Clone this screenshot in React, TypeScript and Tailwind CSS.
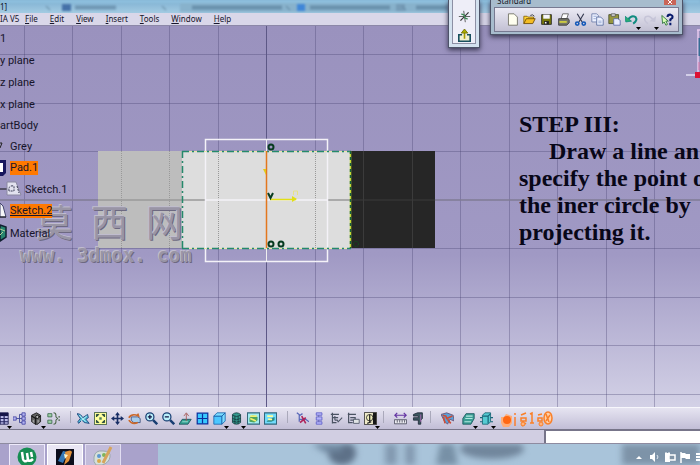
import type { ReactNode } from "react";

const menus = ["File", "Edit", "View", "Insert", "Tools", "Window", "Help"];

const gridX = [24, 72, 121, 169, 218, 315, 363, 412, 460, 509, 557, 606, 654];
const gridY = [28, 77, 125, 222, 271, 319, 368];

type IconProps = { name: string; className?: string };

// every glyph is drawn on a 16 x 16 box
const glyphs: Record<string, ReactNode> = {
  new: <path d="M3 1h7l4 4v10H3z" fill="#fffff0" stroke="#66665a" />,
  open: (
    <>
      <path d="M1 13V4h4l1 1h7v3" fill="#ffd536" stroke="#856000" />
      <path d="M1 13l3-6h11l-3 6z" fill="#f5bd24" stroke="#664400" />
      <path d="M9 3q3-2 5 1" fill="none" stroke="#222" />
    </>
  ),
  save: (
    <>
      <path d="M2 2h12v12H2z" fill="#77770a" stroke="#222" />
      <path d="M4 2h8v5H4z" fill="#f4f4fa" />
      <path d="M5 10h6v4H5z" fill="#222" />
      <path d="M6 11h2v2H6z" fill="#fff" />
    </>
  ),
  print: (
    <>
      <path d="M5 7l2-6h7l-2 6z" fill="#fff" stroke="#555" />
      <path d="M2 7h12l1 2v3l-3 3H2z" fill="#77776a" stroke="#333" />
      <path d="M3 11h9" stroke="#d9d73d" strokeWidth="2" />
    </>
  ),
  cut: (
    <>
      <path d="M4 1l6 10M12 1L6 11" stroke="#33384f" strokeWidth="1.4" />
      <circle cx="4" cy="13" r="2" fill="none" stroke="#1358b8" strokeWidth="2" />
      <circle cx="12" cy="13" r="2" fill="none" stroke="#1358b8" strokeWidth="2" />
    </>
  ),
  copy: (
    <>
      <path d="M1 1h6l2 2v8H1z" fill="#eef2ff" stroke="#6677a5" />
      <path d="M7 5h5l3 3v7H7z" fill="#eef2ff" stroke="#52679c" />
      <path d="M3 4h4M3 7h3M9 10h4M9 12h4" stroke="#8ba0cf" />
    </>
  ),
  paste: (
    <>
      <path d="M1 2h12v11H1z" fill="#97963e" stroke="#444b28" />
      <path d="M4 1h5v3H4z" fill="#dedede" stroke="#555" />
      <path d="M7 7h5l3 2v6H7z" fill="#e9edff" stroke="#5a69a6" />
    </>
  ),
  undo: (
    <>
      <path d="M4 8q4-6 9-3 3 4-3 8" fill="none" stroke="#118c80" strokeWidth="2.5" />
      <path d="M0 4l1 7 7-1z" fill="#29ac72" stroke="#118c80" />
    </>
  ),
  redo: (
    <>
      <path d="M12 8Q8 2 3 5q-3 4 3 8" fill="none" stroke="#c6c5d8" strokeWidth="2" />
      <path d="M16 4l-1 7-7-1z" fill="#c6c5d8" />
    </>
  ),
  help: (
    <>
      <path d="M1 3l1 10 2-2 2 4 2-1-2-4h3z" fill="#d8ffb5" stroke="#226b32" />
      <path d="M8 5q0-3 3.5-3 3.5 1 2.5 4l-2.5 2v2M11.5 12v3" fill="none" stroke="#07196b" strokeWidth="2.5" />
    </>
  ),
  axes: (
    <>
      <path d="M1 8h14M7 1l2 14" stroke="#444" />
      <path d="M3 13L13 3" stroke="#333" strokeWidth="1.5" />
      <path d="M4 5q4 0 4 3t4 3" fill="none" stroke="#3d8a55" strokeWidth="1.5" />
    </>
  ),
  exit: (
    <>
      <path d="M5 7H1v8h14V7h-4" fill="#f1f0d0" stroke="#174f5e" strokeWidth="2" />
      <path d="M8 12V4" stroke="#a49b00" strokeWidth="2" />
      <path d="M4 5l4-5 4 5z" fill="#aeb000" stroke="#6d6a00" />
    </>
  ),
  table: (
    <>
      <path d="M1 1h14v14H1z" fill="#bcbce8" stroke="#151548" />
      <path d="M1 3h14" stroke="#151548" strokeWidth="4" />
      <path d="M1 8h14M1 12h14M5 4v11M10 4v11" stroke="#23235d" strokeWidth="1.5" />
    </>
  ),
  tree: (
    <>
      <path d="M3 8h5M8 3v10M8 3h4M8 8h4M8 13h4" fill="none" stroke="#333c90" />
      <path d="M0 6h4v4H0zM11 1h4v4h-4zM11 6h4v4h-4zM11 11h4v4h-4z" fill="#b5b5f0" stroke="#4242a2" />
    </>
  ),
  gear: (
    <>
      <path d="M2 4l6-3 5 3v8l-5 4-6-4z" fill="#666" stroke="#111" />
      <path d="M2 5l5 3 6-3M7 8v7" fill="none" stroke="#161616" strokeWidth="1.5" />
      <circle cx="9" cy="6" r="2" fill="#bbb" stroke="#000" />
      <path d="M4 10v3M10 10v3" stroke="#ccc" />
    </>
  ),
  relation: (
    <>
      <path d="M1 2h5v4H1zM1 10h5v4H1z" fill="#9cd1a3" stroke="#3c684e" />
      <path d="M8 1q3 0 3 3v2l2 2-2 2v2q0 3-3 3M14 6h2M14 10h2" fill="none" stroke="#4a6547" strokeWidth="1.3" />
    </>
  ),
  fly: (
    <>
      <path d="M0 2q5 0 7 5l6-4 1 4-3 2 4 5-6-1-3-3-4 4-1-2 3-4z" fill="#4fb7d3" stroke="#173e78" />
      <path d="M3 4l8 8M5 11l7-6" stroke="#d5ffff" />
    </>
  ),
  fit: (
    <>
      <path d="M0.5 0.5h15v15h-15z" fill="#ffff9c" stroke="#254a35" />
      <path d="M3 3h3L3 6zM10 3h3v3zM3 10v3h3zM13 10v3h-3z" fill="#173e37" stroke="#173e37" />
      <path d="M6.500 6.500h3v3h-3z" fill="#4f7f62" />
    </>
  ),
  pan: (
    <>
      <path d="M8 3v10M3 8h10" stroke="#162d64" strokeWidth="2" />
      <path d="M8 0l3 4H5zM8 16l3-4H5zM0 8l4-3v6zM16 8l-4-3v6z" fill="#162d64" />
    </>
  ),
  rotate: (
    <>
      <path d="M4 6h8l3 2v5H7l-3-3z" fill="#a6cdec" stroke="#3b4c77" />
      <path d="M1 7q4-6 12-2l-1-3M1 10q4 6 11 3" fill="none" stroke="#cb6828" strokeWidth="2" />
    </>
  ),
  zoomIn: (
    <>
      <circle cx="6" cy="6" r="5" fill="#b9f0fa" stroke="#173d72" strokeWidth="1.5" />
      <path d="M10 10l5 5" stroke="#173d72" strokeWidth="3" />
      <path d="M3.5 6h5M6 3.5v5" stroke="#101040" strokeWidth="1.5" />
    </>
  ),
  zoomOut: (
    <>
      <circle cx="6" cy="6" r="5" fill="#b9f0fa" stroke="#173d72" strokeWidth="1.5" />
      <path d="M10 10l5 5" stroke="#173d72" strokeWidth="3" />
      <path d="M3.5 6h5" stroke="#101040" strokeWidth="1.5" />
    </>
  ),
  normal: (
    <>
      <path d="M0 15l4-6h11l-4 6z" fill="#33a393" stroke="#174e58" />
      <path d="M4 12h7" stroke="#a9e4d9" />
      <path d="M9 11V2M6 5l3-4 3 4" fill="none" stroke="#a4524d" />
    </>
  ),
  multi: (
    <>
      <path d="M1.5 1.5h13v13h-13z" fill="#39c9ff" stroke="#0a2f9d" strokeWidth="1.5" />
      <path d="M8 2v12M2 8h12" stroke="#0a2f9d" strokeWidth="1.5" />
    </>
  ),
  iso: (
    <>
      <path d="M1 5h10v10H1z" fill="#4cc7ff" stroke="#1761aa" />
      <path d="M1 5l4-4h10l-4 4zM11 5l4-4v10l-4 4z" fill="#7cddff" stroke="#1761aa" />
    </>
  ),
  cylinder: (
    <>
      <path d="M3 3q5-4 10 0v10q-5 4-10 0z" fill="#349b8f" stroke="#143a3d" />
      <path d="M3 4q5 3 10 0M3 8q5 3 10 0M3 11q5 3 10 0M6 5v10M10 5v10" fill="none" stroke="#143a3d" />
    </>
  ),
  show: (
    <>
      <path d="M0.5 1h15v14H0.5z" fill="#a3edf1" stroke="#32677d" strokeWidth="1.5" />
      <path d="M3 12V7l4-3 6 2v4l-4 3z" fill="#50a55c" />
      <path d="M4 8l7 3M4 5h8" stroke="#efef71" strokeWidth="2" />
    </>
  ),
  swap: (
    <>
      <path d="M0.5 1h15v14H0.5z" fill="#71dbfb" stroke="#32677d" strokeWidth="1.5" />
      <path d="M3 12l3-3 7-3v4l-4 2z" fill="#288b88" />
      <path d="M4 5h7M5 9h5" stroke="#ffff99" strokeWidth="2" />
    </>
  ),
  constraint: (
    <>
      <path d="M1 1l4 3 3-2M4 3v9M4 9h8l4 3" fill="none" stroke="#5867b8" strokeWidth="1.5" />
      <path d="M7 5l5 9M12 7l-7 6" stroke="#af245a" strokeWidth="2" />
    </>
  ),
  stack: (
    <>
      <path d="M4 1h7v3H4zM4 6h7v4H4zM4 12h7v3H4z" fill="#b5b5fa" stroke="#5c5cc6" />
      <path d="M7 4v2M7 10v2" stroke="#5c5cab" />
    </>
  ),
  list: (
    <>
      <path d="M3 1v13M1 3h10M3 7h7M3 13h5" fill="none" stroke="#4b5363" strokeWidth="1.5" />
      <path d="M6 10h3l1 2 5-5M6 5v5" fill="none" stroke="#4b5363" strokeWidth="1.3" />
    </>
  ),
  listBox: (
    <>
      <path d="M2 1v12h5M1 3h10M4 7h6v3H4" fill="none" stroke="#4b5363" strokeWidth="1.5" />
      <path d="M8 9h7v5H8z" fill="#dfe3e4" stroke="#4b5363" />
    </>
  ),
  contrast: (
    <>
      <path d="M0.5 0.5h15v15H0.5z" fill="#f0ebc9" stroke="#222" />
      <path d="M11 1h4v14h-4z" fill="#161616" />
      <circle cx="7" cy="7" r="4" fill="#f1efbb" stroke="#222" />
      <path d="M7 3v9M4 14l5-2" stroke="#222" strokeWidth="1.5" />
    </>
  ),
  measure: (
    <>
      <path d="M1 4h14M4 1L1 4l3 3M12 1l3 3-3 3" fill="none" stroke="#6434a3" strokeWidth="1.5" />
      <path d="M0.5 9.5h15v5H0.5zM4 10v3M7 10v3M10 10v3M13 10v3" fill="#ededf2" stroke="#444658" />
    </>
  ),
  caliper: (
    <>
      <path d="M3 3l5-2h6v7l-2 2v5H9v-5H3V7h6V5H3z" fill="#3d5860" stroke="#1c2635" />
      <path d="M12 3v9" stroke="#bd6dc4" />
    </>
  ),
  material: (
    <>
      <path d="M0 3l7-2 8 3 1 7-5-2-3 6-4-4z" fill="#58a0d9" stroke="#674e70" />
      <path d="M2 4l4 1 1 3 7-3M3 6l2 8M8 9l4 5" fill="none" stroke="#cf4c34" strokeWidth="2" />
    </>
  ),
  workbench: (
    <>
      <path d="M1 15V8l4-6h10v6l-4 7z" fill="#3c9e94" stroke="#17555d" />
      <path d="M5 5h8M4 8h9M3 12h8" stroke="#b1e8df" strokeWidth="1.5" />
    </>
  ),
  solid: (
    <>
      <path d="M3 4l3-3h7v11l-3 3H3z" fill="#55cbd2" stroke="#17606f" />
      <path d="M3 5h7l3-3M10 5v9M0 7h3M0 12h3M13 7h3M13 12h3" fill="none" stroke="#176679" strokeWidth="1.5" />
    </>
  ),
  snap1: (
    <>
      <path d="M0 6h3l2-3 6 2v7l-3 4H2l-2-4z" fill="#ffad77" />
      <circle cx="6" cy="9" r="4" fill="#ff6814" />
      <path d="M14 2v2M14 6v9" stroke="#fa7d2e" strokeWidth="1.5" />
    </>
  ),
  snap2: (
    <>
      <path d="M2 4l5-2M2 7h5v3H2zM4 10v5M7 12l-4 3M11 3l2-1v10M11 12h4" fill="none" stroke="#fa8028" strokeWidth="1.5" />
      <circle cx="4" cy="13" r="2" fill="#ffb27c" stroke="#fa8028" />
    </>
  ),
  snap3: (
    <>
      <path d="M1 4l4-1M1 7h4v3H1z" fill="none" stroke="#fa8028" strokeWidth="1.5" />
      <circle cx="4" cy="13" r="2" fill="#ffb27c" stroke="#fa8028" />
      <ellipse cx="11" cy="7" rx="4" ry="6" fill="#ffd0aa" stroke="#fa8028" strokeWidth="1.5" />
      <path d="M9 3l3 8M13 4l-4 6" stroke="#fa8028" strokeWidth="1.5" />
    </>
  ),
};

function Icon({ name, className = "size-4" }: IconProps) {
  return (
    <svg viewBox="0 0 16 16" className={className} aria-hidden="true">
      {glyphs[name]}
    </svg>
  );
}

type ToolButtonProps = { name: string; menu?: boolean; large?: boolean };

function ToolButton({ name, menu = false, large = false }: ToolButtonProps) {
  return (
    <button aria-label={name} className="relative flex size-4 shrink-0 items-center justify-center">
      <Icon name={name} className={large ? "size-4" : "size-[13px]"} />
      {menu && (
        <svg viewBox="0 0 5 3" className="absolute -right-[2px] -bottom-[2px] z-10 h-[3px] w-[5px]" aria-hidden="true">
          <path d="M0 0h5L2.5 3z" fill="#000" />
        </svg>
      )}
    </button>
  );
}

function Viewport() {
  return (
    <svg className="absolute inset-0 h-full w-full" aria-label="Sketch view">
      <g stroke="#45406f" strokeOpacity="0.34" shapeRendering="crispEdges">
        {gridX.map((x) => (
          <line key={x} x1={x + 0.5} x2={x + 0.5} y1="0" y2="100%" />
        ))}
        {gridY.map((y) => (
          <line key={y} x1="0" x2="100%" y1={y + 0.5} y2={y + 0.5} />
        ))}
      </g>
      <line x1="266.5" x2="266.5" y1="0" y2="100%" stroke="#5d5886" />
      <line x1="0" x2="100%" y1="174" y2="174" stroke="#7f7b95" strokeWidth="1.5" />

      <path d="M98 125h84v97H98z" fill="#bdbdbd" />
      <path d="M182 125h169v97H182z" fill="#dddddd" />
      <path d="M351 125h84v97h-84z" fill="#262626" />
      <path d="M121.5 125v97M169.5 125v97M218.5 125v97M315.5 125v97" stroke="#999" strokeDasharray="1 1" />
      <path d="M363.5 125v97M412.5 125v97M351 174h84" stroke="#3b3b3b" />
      <path d="M98 174h107M327 174h24" stroke="#999" strokeWidth="1.5" />
      <path d="M205.5 113.5h122v122h-122zM205 174h122" fill="none" stroke="#f4f2f8" strokeWidth="1.5" />
      <path d="M266.5 113v122" stroke="#eee" />

      <path d="M182 125.5h169M182 222.5h169" stroke="#e8e5a9" />
      <path
        d="M182 125.5h169M182.5 125v97M182 222.5h169"
        fill="none"
        stroke="#25896b"
        strokeWidth="1.5"
        strokeDasharray="7 3 2 3"
      />
      <path d="M350.5 125v97" stroke="#c5dc35" strokeWidth="1.5" />
      <path d="M350.5 125v97" stroke="#185f40" strokeWidth="1.5" strokeDasharray="3 3" />

      <path d="M266.5 125v97" stroke="#e3771e" strokeWidth="1.5" />
      <path d="M270 173.5h26" stroke="#e2df16" strokeWidth="1.5" />
      <path d="M292 170l5 3-5 3z" fill="#e2df16" />
      <path d="M293.5 169v-4h4v4" fill="none" stroke="#e5e28a" />
      <path d="M263 143l3 6v-6z" fill="#e2c716" />
      <g fill="none" stroke="#073b20" strokeWidth="2">
        <circle cx="271" cy="121" r="2.5" />
        <circle cx="271" cy="218" r="2.5" />
        <circle cx="281" cy="218" r="2.5" />
        <path d="M268 167l2.5 5 2.5-5" />
      </g>
      <circle cx="356" cy="218" r="2.5" fill="none" stroke="#075b1b" strokeDasharray="1 1" />
    </svg>
  );
}

function Compass() {
  return (
    <svg viewBox="0 0 14 60" className="absolute top-0 right-0 h-[60px] w-[14px]" aria-hidden="true">
      <path d="M11 4h3M12 4v42" stroke="#e6c9ee" strokeWidth="1.5" />
      <path d="M12.5 12h1.5v18h-1.5z" fill="#356d93" />
      <path d="M0 49h10" stroke="#e4e2f5" strokeWidth="1.5" />
      <path d="M13 36v8" stroke="#d977a8" />
      <path d="M9 46h5v6H9z" fill="#dd1234" />
    </svg>
  );
}

function TreeIcon({ kind }: { kind: string }) {
  if (kind === "pad") {
    return (
      <svg viewBox="0 0 8 20" className="h-5 w-2">
        <path d="M0 2h6v13l-3 3H0z" fill="#17175d" />
        <path d="M0 5h3v9H0z" fill="#fff" />
      </svg>
    );
  }
  if (kind === "sketch") {
    return (
      <svg viewBox="0 0 8 20" className="h-5 w-2">
        <path d="M0 2l3 3 3 11H0z" fill="#f5f5f7" stroke="#42456d" />
        <path d="M0 16h6" stroke="#111" />
      </svg>
    );
  }
  return (
    <svg viewBox="0 0 8 20" className="h-5 w-2">
      <path d="M0 2l6 2v10l-6 4z" fill="#27856d" stroke="#111f30" strokeWidth="1.5" />
      <path d="M0 6l5 2M0 12l3-3" stroke="#b7cf9c" />
    </svg>
  );
}

function FeatureTree() {
  return (
    <ul className="relative w-40 pt-[2px] font-[Roboto,sans-serif] text-[11px] leading-[21px] text-[#17152b]">
      <li className="h-[22px]">1</li>
      <li className="h-[22px]">y plane</li>
      <li className="h-[22px]">z plane</li>
      <li className="h-[21px]">x plane</li>
      <li className="h-[21px]">artBody</li>
      <li className="flex h-[21px] items-center">
        <svg viewBox="0 0 10 12" className="h-3 w-[10px]">
          <path d="M0 2h2L0 7" stroke="#222" fill="none" />
        </svg>
        Grey
      </li>
      <li className="flex h-[21px] items-center gap-[2px]">
        <TreeIcon kind="pad" />
        <span className="bg-[#ff7900] leading-[14px]">Pad.1</span>
      </li>
      <li className="flex h-[22px] items-center gap-[3px]">
        <svg viewBox="0 0 22 16" className="h-4 w-[22px]">
          <path d="M0 8h7" stroke="#111" />
          <path d="M7 1h9l5 13H7z" fill="#e2e2ef" stroke="#8a88a1" />
          <path d="M9 10q-1-6 5-5v5H9M17 5l2 7" fill="none" stroke="#393b55" strokeDasharray="2 1" />
        </svg>
        Sketch.1
      </li>
      <li className="flex h-[22px] items-center gap-[2px]">
        <TreeIcon kind="sketch" />
        <span className="bg-[#ff7900] leading-[14px] underline">Sketch.2</span>
      </li>
      <li className="flex h-[22px] items-center gap-[2px]">
        <TreeIcon kind="material" />
        Material
      </li>
    </ul>
  );
}

function Watermark() {
  return (
    <div className="absolute top-[175px] left-5 text-[#9995a6] [text-shadow:-1px_-1px_0_#c0bdce,1px_1px_0_#6d6981]">
      <div className="flex gap-[18px] pl-4 font-['Noto_Sans_CJK_SC',sans-serif] text-[37px] leading-10">
        <span>莫</span>
        <span>西</span>
        <span>网</span>
      </div>
      <div className="font-['DejaVu_Sans_Mono',monospace] text-[19px] leading-7 font-bold whitespace-pre">
        www. 3dmox. com
      </div>
    </div>
  );
}

function StepNote() {
  return (
    <div className="absolute inset-y-0 right-0 left-[519px] overflow-hidden pt-[85px] font-['Liberation_Serif',serif] text-[24px] leading-[27px] font-bold whitespace-nowrap text-[#080718]">
      <h1>STEP III:</h1>
      <p className="pl-[30px]">Draw a line an</p>
      <p>specify the point o</p>
      <p>the iner circle by</p>
      <p>projecting it.</p>
    </div>
  );
}

function FloatingPalettes() {
  return (
    <>
      <div className="absolute top-0 left-[448px] z-10 h-12 w-8 border border-t-0 border-[#4d5368] bg-[#d3e1ef] px-[3px] pb-[3px] shadow-[0_2px_5px_#393650]">
        <div className="flex h-full flex-col items-center justify-end gap-[3px] border border-t-0 border-[#8d90a5] bg-[#eeeef8]">
          <ToolButton name="axes" />
          <ToolButton name="exit" />
        </div>
      </div>
      <section
        aria-label="Standard"
        className="absolute top-0 left-[490px] z-10 h-[35px] w-[193px] border border-t-0 border-[#4d5368] bg-[#a7bccd] px-[3px] pb-[2px] shadow-[0_2px_5px_#393650]"
      >
        <header className="flex h-[7px] items-end justify-between overflow-hidden">
          <span className="pl-[3px] text-[8px] leading-[12px] text-[#151a28]">Standard</span>
          <button aria-label="Close" className="mr-[3px] h-[5px] w-3 self-start bg-[#c96457]">
            <svg viewBox="0 0 12 5" className="h-[5px] w-3">
              <path d="M4 0l4 4M8 0L4 4" stroke="#fff" />
            </svg>
          </button>
        </header>
        <div className="flex h-[25px] items-center gap-px border border-[#777a91] bg-linear-to-b from-[#ebeaf4] to-[#c2c0d3] pl-[9px]">
          <ToolButton name="new" />
          <ToolButton name="open" />
          <ToolButton name="save" />
          <ToolButton name="print" />
          <ToolButton name="cut" />
          <ToolButton name="copy" />
          <ToolButton name="paste" />
          <div className="flex gap-[2px]">
            <ToolButton name="undo" menu />
            <ToolButton name="redo" menu />
            <ToolButton name="help" />
          </div>
        </div>
      </section>
    </>
  );
}

function Divider() {
  return <span className="h-3 w-px shrink-0 bg-[#aaa9bb]" />;
}

function BottomToolbar() {
  return (
    <div
      role="toolbar"
      className="flex h-[23px] items-center gap-px overflow-hidden border-t border-b border-t-[#f7f7fc] border-b-[#777588] bg-linear-to-b from-[#e6e4f1] to-[#c2bed6]"
    >
      <div className="-ml-[6px] flex w-[80px] shrink-0 gap-px">
        <ToolButton name="table" menu />
        <ToolButton name="tree" />
        <ToolButton name="gear" menu />
        <ToolButton name="relation" />
        <span className="ml-2 flex">
          <Divider />
        </span>
      </div>
      <div className="flex w-[218px] shrink-0 gap-px">
        <ToolButton name="fly" />
        <ToolButton name="fit" />
        <ToolButton name="pan" />
        <ToolButton name="rotate" />
        <ToolButton name="zoomIn" />
        <ToolButton name="zoomOut" />
        <ToolButton name="normal" />
        <ToolButton name="multi" />
        <ToolButton name="iso" menu />
        <ToolButton name="cylinder" menu />
        <ToolButton name="show" />
        <ToolButton name="swap" />
        <span className="ml-2 flex">
          <Divider />
        </span>
      </div>
      <div className="flex w-[97px] shrink-0 gap-px">
        <ToolButton name="constraint" />
        <ToolButton name="stack" />
        <ToolButton name="list" />
        <ToolButton name="listBox" />
        <ToolButton name="contrast" menu />
        <span className="ml-1 flex">
          <Divider />
        </span>
      </div>
      <div className="flex w-[46px] shrink-0 gap-px">
        <ToolButton name="measure" />
        <ToolButton name="caliper" />
        <span className="ml-1 flex">
          <Divider />
        </span>
      </div>
      <div className="flex w-[20px] shrink-0">
        <ToolButton name="material" />
      </div>
      <div className="flex w-[40px] shrink-0 gap-[2px]">
        <ToolButton name="workbench" menu />
        <ToolButton name="solid" menu />
      </div>
      <div className="flex gap-[2px]">
        <ToolButton name="snap1" large />
        <ToolButton name="snap2" large />
        <ToolButton name="snap3" large />
      </div>
    </div>
  );
}

function Taskbar() {
  return (
    <footer className="relative flex h-[21px] items-start gap-[2px] overflow-hidden bg-[#a9c4da] pl-[9px]">
      {/* blurred wallpaper behind the glass */}
      <div className="absolute inset-y-0 left-0 w-[158px] bg-[#a9a2cb]" />
      <svg className="absolute inset-0 h-full w-full blur-[3px]" aria-hidden="true">
        <ellipse cx="342" cy="9" rx="14" ry="12" fill="#5d7087" />
        <path d="M312 0h30v8h-18z" fill="#6f879f" />
        <path d="M385 0h12v21h-12zM405 0h10v21h-10z" fill="#8299b0" />
        <path d="M440 0h14l4 21h-22z" fill="#7790a6" />
        <ellipse cx="492" cy="5" rx="32" ry="10" fill="#71869c" />
        <path d="M622 0h90v24h-90z" fill="#7d93a8" />
      </svg>
      <button aria-label="uTorrent" className="relative h-[21px] w-9 border border-b-0 border-[#eeeafb] bg-[#c2bcda]">
        <svg viewBox="0 0 24 20" className="mx-auto h-5 w-6">
          <circle cx="12" cy="12" r="9.5" fill="#168d52" />
          <path d="M7 7l1 7q1 4 5 1l-1-7M13 15q2 2 5-1M16 7l1 5" fill="none" stroke="#fff" strokeWidth="2.5" />
        </svg>
      </button>
      <button aria-label="CATIA" className="relative h-[21px] w-9 border border-b-0 border-white bg-[#e9e6f4]">
        <svg viewBox="0 0 20 20" className="mx-auto h-5 w-5">
          <path d="M1 4h18v16H1z" fill="#0b0d1c" />
          <path d="M3 16l5-10 5 1-5 11z" fill="#3478b8" />
          <path d="M10 7q6-3 7 0l-3 9-5 4 2-7z" fill="#e2923b" />
          <path d="M9 9l4 1-3 4z" fill="#fff3c8" />
        </svg>
      </button>
      <button aria-label="Paint" className="relative h-[21px] w-9 border border-b-0 border-[#e2def2] bg-[#c2bcda]">
        <svg viewBox="0 0 24 20" className="mx-auto h-5 w-6">
          <path d="M3 12q1-7 9-6 8 0 7 6t-8 8H5q-3-3-2-8z" fill="#d6e0d9" stroke="#9aa7ad" />
          <circle cx="8" cy="11" r="2" fill="#5c98d0" />
          <circle cx="13" cy="10" r="2" fill="#7fb45a" />
          <circle cx="8" cy="16" r="2" fill="#d9a94c" />
          <path d="M20 2l-8 16" stroke="#d6a45c" strokeWidth="3" />
        </svg>
      </button>
      <div className="relative ml-auto flex h-full items-center gap-[3px] pt-1">
        <svg viewBox="0 0 8 12" className="mr-[3px] h-3 w-2" aria-hidden="true">
          <path d="M1 8l3-3 3 3z" fill="#fff" />
        </svg>
        <svg viewBox="0 0 12 12" className="h-3 w-3" aria-hidden="true">
          <path d="M1 4h2l3-3v10L3 8H1z" fill="#fff" />
          <path d="M8 4q2 2 0 4" fill="none" stroke="#dfe8f0" />
        </svg>
        <svg viewBox="0 0 12 12" className="h-3 w-3" aria-hidden="true">
          <path d="M1 2h5v9H1z" fill="#fff" />
          <path d="M5 4h6v5H5z" fill="#8194a6" stroke="#fff" strokeWidth="1.5" />
          <path d="M2 1v2M5 1v2" stroke="#fff" />
        </svg>
        <svg viewBox="0 0 12 12" className="h-3 w-3" aria-hidden="true">
          <path d="M2 1v11" stroke="#fff" strokeWidth="1.5" />
          <path d="M2 2h4l1 1h4v5H7L6 7H2z" fill="#fff" />
        </svg>
        <svg viewBox="0 0 6 12" className="h-3 w-[6px]" aria-hidden="true">
          <path d="M2 3h4M2 6h4M2 9h4" stroke="#fff" strokeWidth="2" />
        </svg>
      </div>
    </footer>
  );
}

function TitleBar() {
  return (
    <header className="relative h-[13px] overflow-hidden bg-linear-to-b from-[#7fb0d2] to-[#a3cbe2] text-[8px] leading-[13px] text-[#10131f]">
      {/* window behind the glass frame */}
      <svg className="absolute inset-0 h-full w-full blur-[1px]" aria-hidden="true">
        <path d="M0 0h700v3H0z" fill="#8ec0de" />
        <path d="M180 3h280v9H180z" fill="#88b2cc" />
        <path d="M62 4h9v7h-9z" fill="#4571a8" />
        <path d="M75 7.5h41M192 7.5h90M310 7.5h80M416 7.5h32" stroke="#4b6f8b" strokeWidth="4" opacity="0.5" />
        <path d="M46 6l4 4M162 6l4 4M286 6l4 4M402 6l4 4" stroke="#547892" />
        <path d="M297 4h8v7h-8z" fill="#3f86d8" />
        <path d="M396 4h9v7h-9z" fill="#6b8ea9" opacity="0.6" />
      </svg>
      <span className="relative">1]</span>
    </header>
  );
}

export default function App() {
  return (
    <main className="flex min-h-screen flex-col overflow-hidden bg-[#d1cee2] font-['Noto_Sans',sans-serif]">
      <div className="relative z-10">
        <TitleBar />
        <nav className="flex h-[13px] items-center border-b border-[#8c88a8] bg-[#d9d7e9] text-[8px] leading-[12px] text-[#17152b]">
          <span className="w-[25px]">IA V5</span>
          {menus.map((menu) => (
            <button key={menu} className="mr-3 first-letter:underline">
              {menu}
            </button>
          ))}
        </nav>
        <FloatingPalettes />
      </div>
      <div className="relative flex-1 bg-linear-to-b from-[#9a92be] via-[#a099c4] via-60% to-[#d3d1e6]">
        <Viewport />
        <Compass />
        <Watermark />
        <FeatureTree />
        <StepNote />
      </div>
      <BottomToolbar />
      <div className="flex h-[14px] border-b border-[#8e8ba0]">
        <input
          aria-label="Command"
          className="ml-auto w-[156px] border-t border-l-2 border-[#77758a] bg-white px-1 text-[8px]"
        />
      </div>
      <Taskbar />
    </main>
  );
}
